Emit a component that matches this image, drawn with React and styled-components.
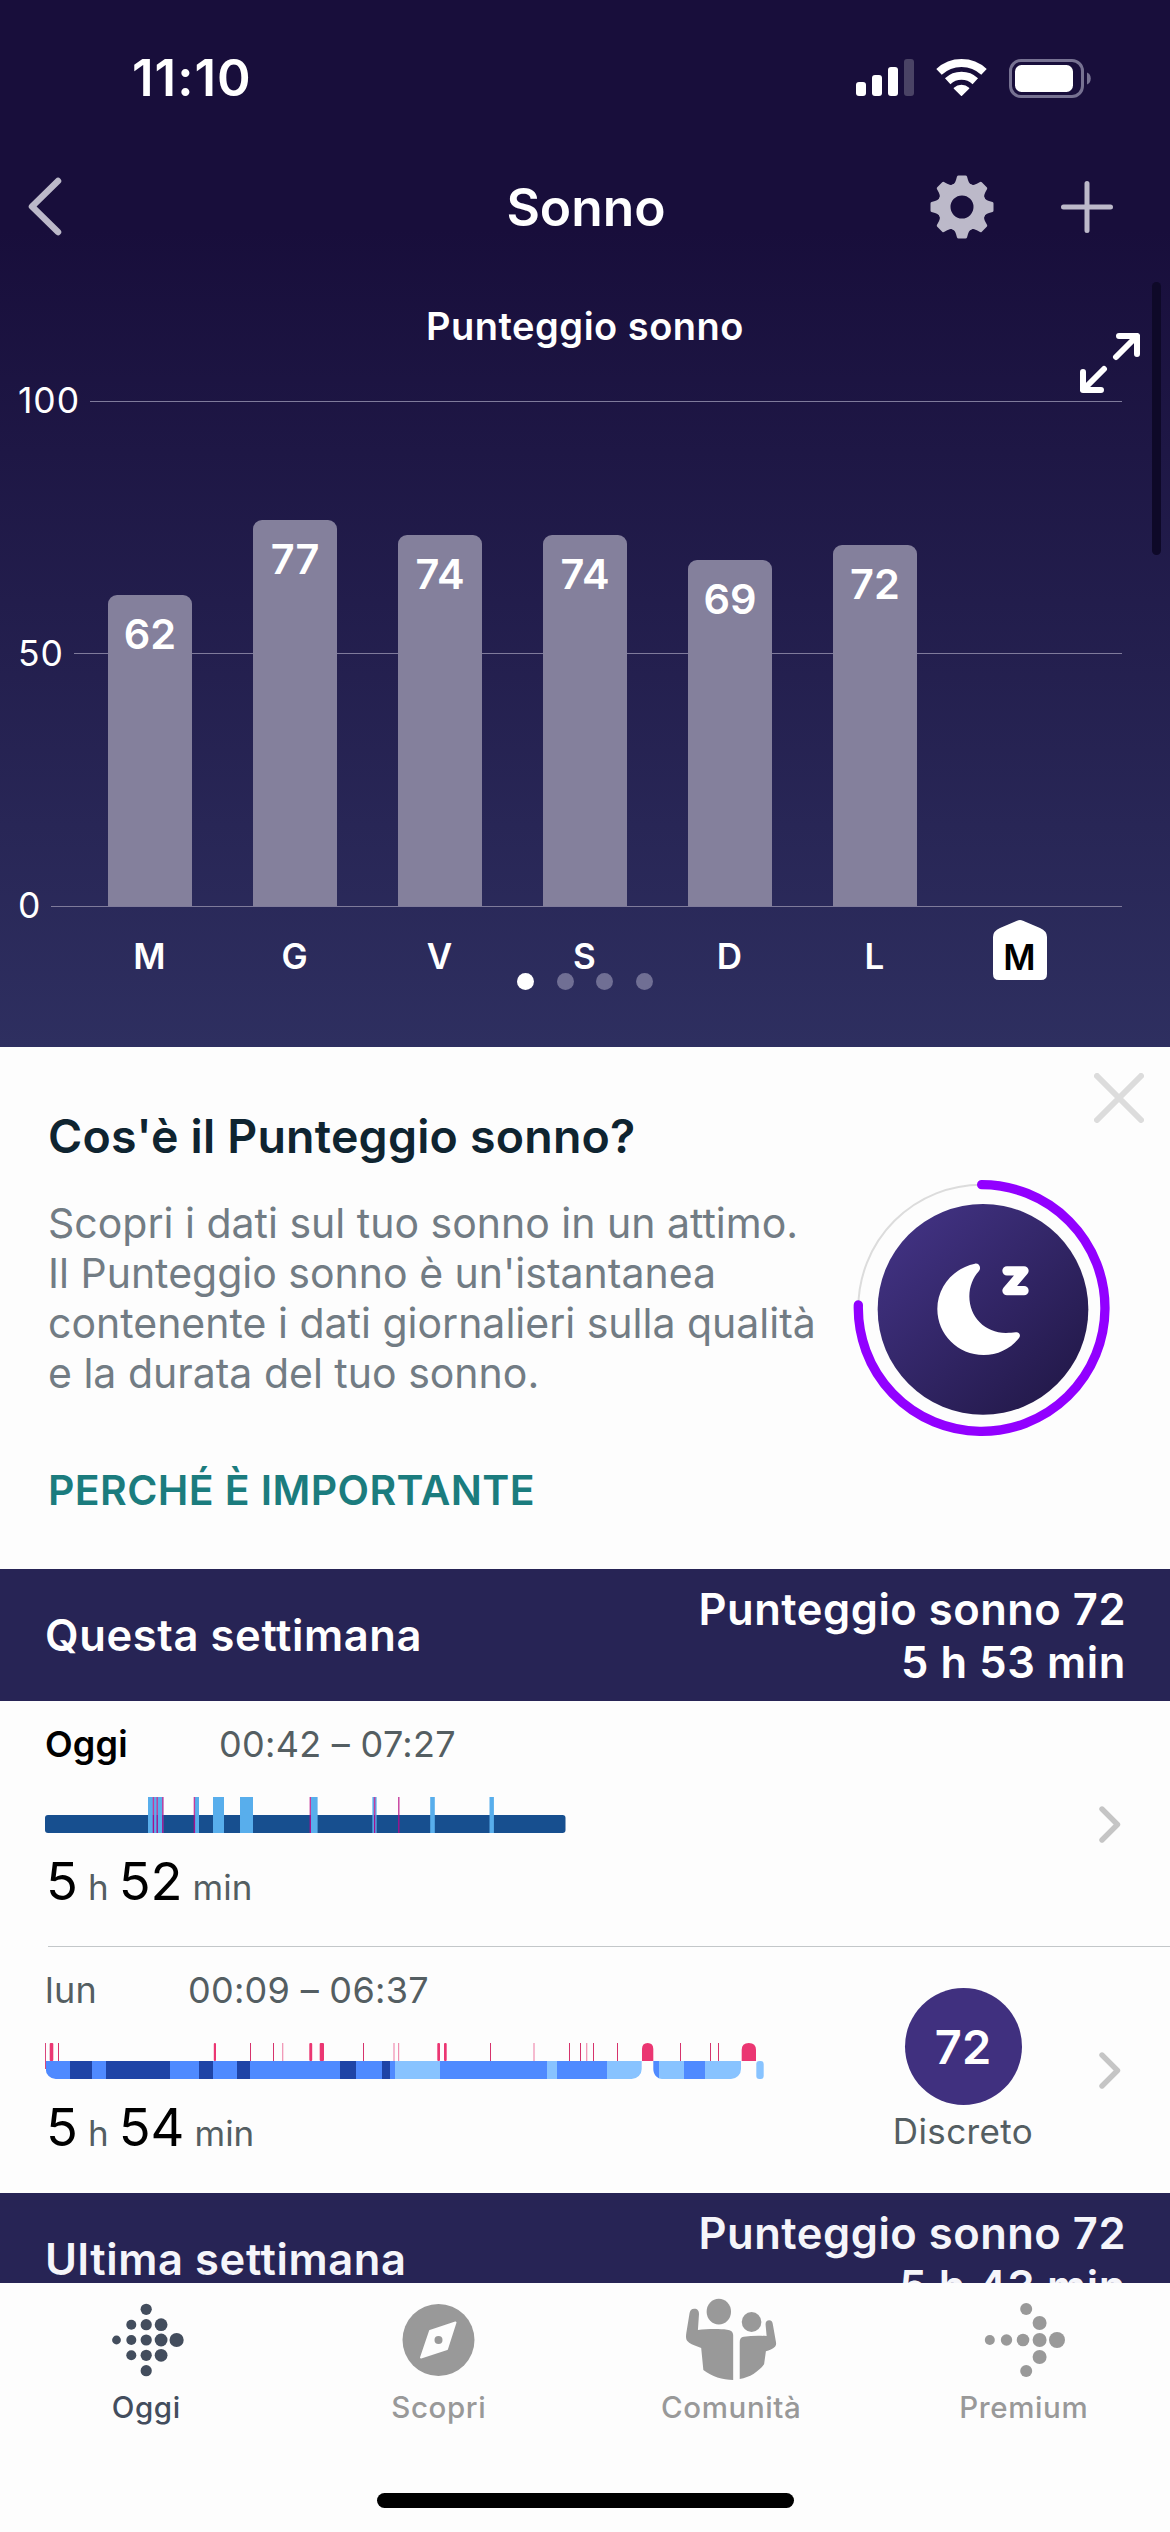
import React from "react";
import styled, { createGlobalStyle } from "styled-components";

const GlobalStyle = createGlobalStyle`
  * { box-sizing: border-box; }
  body {
    margin: 0;
    background: #fdfdfd;
    font-family: Inter, "Liberation Sans", sans-serif;
  }
`;

const Screen = styled.div`
  width: 1170px;
  height: 2532px;
  overflow: hidden;
  display: flex;
  flex-direction: column;
  background: #fdfdfd;
`;

const Text = styled.span`
  font-size: ${(p) => p.$size}px;
  font-weight: ${(p) => p.$weight || 400};
  letter-spacing: ${(p) => p.$track || 0}px;
  color: ${(p) => p.$color || "#fff"};
  line-height: ${(p) => p.$line || 44}px;
  white-space: nowrap;
`;

/* ---------- hero ---------- */

const Hero = styled.header`
  position: relative;
  flex: none;
  height: 1047px;
  background: linear-gradient(180deg, #180e3b 0, #180e3b 230px, #2e2f60 100%);
`;

const StatusBar = styled.div`
  height: 156px;
  padding: 0 79px 0 132px;
  display: flex;
  align-items: center;
  justify-content: space-between;
`;

const StatusIcons = styled.div`
  display: flex;
  align-items: center;
  gap: 22px;
`;

const NavBar = styled.nav`
  height: 101px;
  padding: 0 53px 0 26px;
  display: grid;
  grid-template-columns: 1fr auto 1fr;
  align-items: center;
`;

const NavActions = styled.div`
  display: flex;
  justify-content: flex-end;
  align-items: center;
  gap: 63px;
`;

const NavTitle = styled(Text)`
  padding-left: 29px;
`;

const ChartTitle = styled(Text)`
  display: block;
  margin: 46px 0 37px;
  text-align: center;
`;

const Plot = styled.div`
  display: grid;
  height: 533px;
`;

const AxisLayer = styled.div`
  grid-area: 1 / 1;
  padding: 0 48px 0 18px;
  display: flex;
  flex-direction: column;
  justify-content: space-between;
`;

const AxisRow = styled.div`
  height: 28px;
  display: flex;
  align-items: center;
  gap: 10px;
`;

const AxisLine = styled.i`
  flex: 1;
  height: 1px;
  background: #7f7b9b;
`;

const BarLayer = styled.div`
  grid-area: 1 / 1;
  padding: 0 0 14px 108px;
  display: flex;
  align-items: flex-end;
  gap: 61px;
`;

const Bar = styled.div`
  width: 84px;
  height: ${(p) => p.$score * 5.015}px;
  padding-top: 17px;
  border-radius: 9px 9px 0 0;
  background: #84809c;
  text-align: center;
`;

const Days = styled.div`
  height: 60px;
  margin-left: 77px;
  display: flex;
`;

const Day = styled.div`
  width: 145px;
  padding-top: 14px;
  display: flex;
  justify-content: center;
`;

const TodayTag = styled.div`
  position: relative;
  width: 54px;
  height: 60px;
  margin-top: -14px;
  padding-top: 15px;
  text-align: center;
  svg { position: absolute; inset: 0; }
  span { position: relative; }
`;

const Dots = styled.div`
  margin-top: -7px;
  display: flex;
  justify-content: center;
  gap: 22.6px;
`;

const Dot = styled.i`
  width: 17px;
  height: 17px;
  border-radius: 50%;
  background: ${(p) => (p.$active ? "#fff" : "#706f94")};
`;

const ExpandButton = styled.div`
  position: absolute;
  left: 1080px;
  top: 333px;
  line-height: 0;
`;

const ScrollThumb = styled.i`
  position: absolute;
  right: 9px;
  top: 282px;
  width: 9px;
  height: 273px;
  border-radius: 5px;
  background: #0e0928;
`;

/* ---------- info card ---------- */

const InfoCard = styled.section`
  position: relative;
  flex: none;
  height: 522px;
  padding: 59px 0 0 48px;
  display: flex;
`;

const InfoCopy = styled.div`
  width: 805px;
  display: flex;
  flex-direction: column;
`;

const InfoBody = styled(Text)`
  margin: 32px 0 67px;
`;

const Ring = styled.div`
  margin-top: 73px;
  line-height: 0;
`;

const CloseButton = styled.div`
  position: absolute;
  right: 26px;
  top: 26px;
  line-height: 0;
`;

/* ---------- list ---------- */

const List = styled.main`
  flex: none;
  height: 714px;
  overflow: hidden;
`;

const WeekHeader = styled.div`
  height: 132px;
  padding: 0 44px 0 45px;
  display: flex;
  align-items: center;
  justify-content: space-between;
  background: #272455;
`;

const WeekTotals = styled.div`
  padding-top: 2px;
  display: flex;
  flex-direction: column;
  align-items: flex-end;
`;

const NightRow = styled.article`
  height: 246px;
  padding: 0 50px 0 45px;
  display: grid;
  grid-template-columns: 1fr 150px 21px;
  column-gap: 61px;
  background: ${(p) =>
    p.$divided
      ? "linear-gradient(#c3c7c9, #c3c7c9) 48px 100% / 1122px 1px no-repeat"
      : "none"};
`;

const Night = styled.div`
  padding-top: 21px;
  svg { display: block; margin-top: 31px; }
`;

const NightHead = styled.div`
  display: flex;
  gap: 91px;
`;

const Duration = styled.div`
  margin: 18px 0 0 1px;
  display: flex;
  align-items: baseline;
  gap: 10px;
`;

const Score = styled.div`
  padding-top: 41px;
  display: flex;
  flex-direction: column;
  align-items: center;
  gap: 6px;
`;

const ScoreDisc = styled.div`
  width: 117px;
  height: 117px;
  border-radius: 50%;
  background: #40307f;
  display: flex;
  align-items: center;
  justify-content: center;
`;

const RowChevron = styled.div`
  align-self: center;
  line-height: 0;
`;

/* ---------- tab bar ---------- */

const TabBar = styled.footer`
  flex: 1;
  display: flex;
  flex-direction: column;
  align-items: center;
  background: #fdfdfd;
`;

const Tabs = styled.div`
  width: 100%;
  height: 210px;
  display: grid;
  grid-template-columns: repeat(4, 1fr);
`;

const Tab = styled.div`
  padding-top: 12px;
  display: flex;
  flex-direction: column;
  align-items: center;
  gap: 2px;
  color: ${(p) => (p.$active ? "#434d5d" : "#999")};
`;

const HomeIndicator = styled.i`
  width: 417px;
  height: 15px;
  border-radius: 8px;
  background: #000;
`;

/* ---------- drawings ---------- */

const Signal = () => (
  <svg width="58" height="38" viewBox="0 0 58 38">
    <g fill="#fff">
      <rect x="0" y="23" width="10" height="14" rx="3" />
      <rect x="16" y="16" width="10" height="21" rx="3" />
      <rect x="32" y="8" width="10" height="29" rx="3" />
      <rect x="48" y="0" width="10" height="37" rx="3" fill="#4a4365" />
    </g>
  </svg>
);

const Wifi = () => (
  <svg width="51" height="38" viewBox="0 0 51 38">
    <g fill="none" stroke="#fff" strokeWidth="8">
      <path d="M3 12.9A33 33 0 0 1 48 12.9" />
      <path d="M11.7 22.2A20.3 20.3 0 0 1 39.3 22.2" />
    </g>
    <path
      d="M25.5 36.2L18.4 29.2A10.5 10.5 0 0 1 32.6 29.2Z"
      fill="#fff"
      stroke="#fff"
      strokeWidth="1.5"
      strokeLinejoin="round"
    />
  </svg>
);

const Battery = () => (
  <svg width="82" height="39" viewBox="0 0 82 39">
    <rect x="1.5" y="1.5" width="72" height="36" rx="10.5" fill="none" stroke="#777292" strokeWidth="3" />
    <rect x="6" y="6" width="58" height="27" rx="6.5" fill="#fff" />
    <path d="M78 13.5C83 15 83 24 78 25.5Z" fill="#777292" />
  </svg>
);

const Back = () => (
  <svg width="37" height="63" viewBox="0 0 37 63">
    <path d="M32 6L6 31.500L32 57" fill="none" stroke="#bcb9c9" strokeWidth="6.500" strokeLinecap="round" strokeLinejoin="round" />
  </svg>
);

const Gear = () => (
  <svg width="64" height="64" viewBox="-32 -32 64 64">
    <circle r="18" fill="none" stroke="#bcb9c9" strokeWidth="13" />
    {[0, 45, 90, 135, 180, 225, 270, 315].map((a) => (
      <path
        key={a}
        transform={`rotate(${a})`}
        d="M-11 -20.500C-8 -23 -7 -24 -6 -27L-5 -30.500Q-4.600 -31.500 -3.500 -31.500H3.500Q4.600 -31.500 5 -30.500L6 -27C7 -24 8 -23 11 -20.500Z"
        fill="#bcb9c9"
      />
    ))}
  </svg>
);

const Plus = () => (
  <svg width="60" height="60" viewBox="0 0 60 60">
    <path d="M30 6.500V53.500M6.500 30H53.500" stroke="#bcb9c9" strokeWidth="5" strokeLinecap="round" />
  </svg>
);

const Expand = () => (
  <svg width="60" height="60" viewBox="0 0 60 60" fill="none" stroke="#fff" strokeWidth="6" strokeLinecap="round" strokeLinejoin="round">
    <path d="M39 3H57V21M57 3L36 24" />
    <path d="M3 39V57H21M3 57L24 36" />
  </svg>
);

const Close = () => (
  <svg width="50" height="50" viewBox="0 0 50 50">
    <path d="M3 3L47 47M47 3L3 47" stroke="#dcdcdc" strokeWidth="6" strokeLinecap="round" />
  </svg>
);

const SleepRing = () => (
  <svg width="258" height="258" viewBox="159 416 774 774">
    <defs>
      <linearGradient id="disc" x1="0.15" y1="0.12" x2="0.85" y2="0.88">
        <stop offset="0" stopColor="#403180" />
        <stop offset="1" stopColor="#241a4c" />
      </linearGradient>
    </defs>
    <circle cx="545" cy="803" r="370" fill="none" stroke="#dcdcdc" strokeWidth="6" />
    <path d="M545 433A370 370 0 1 1 175 794" fill="none" stroke="#9200ff" strokeWidth="28" strokeLinecap="round" />
    <circle cx="549" cy="807" r="316" fill="url(#disc)" />
    <path
      d="M525 670C460 683 412 740 412 806C412 883 474 944 551 944C594 944 632 925 657 893C664 884 657 874 647 876C638 877 630 878 618 878C555 878 508 830 508 768C508 738 519 712 537 692C545 682 537 668 525 670Z"
      fill="#fff"
    />
    <path d="M621 691.500H672L621 751H672" fill="none" stroke="#fff" strokeWidth="28" strokeLinecap="round" strokeLinejoin="round" />
  </svg>
);

const Chevron = () => (
  <svg width="22" height="37" viewBox="0 0 22 37">
    <path d="M3 3L18.500 18.500L3 34" fill="none" stroke="#c5c5c5" strokeWidth="5.400" strokeLinecap="round" strokeLinejoin="round" />
  </svg>
);

const TagShape = () => (
  <svg width="54" height="60" viewBox="0 0 54 60">
    <path d="M27 0Q28.500 0 30 0.800L47 8Q54 11 54 17V54Q54 60 48 60H6Q0 60 0 54V17Q0 11 7 8L24 0.800Q25.500 0 27 0Z" fill="#fff" />
  </svg>
);

const asleepStripes = [
  [148, 15.3], [194.5, 4.5], [213, 11], [240, 13], [311, 6.6], [372.4, 4.2], [430.2, 4.6], [489.5, 4.4],
];
const awakeStripes = [153.4, 157.2, 162.8, 194.4, 310.3, 374.6, 398.8];

const TodayGraph = () => (
  <svg width="521" height="36" viewBox="45 0 521 36">
    <rect x="45" y="18" width="520.500" height="18" rx="3" fill="#174f8f" />
    {asleepStripes.map(([x, w]) => (
      <rect key={x} x={x} y="0" width={w} height="36" fill="#58aeec" />
    ))}
    {awakeStripes.map((x) => (
      <g key={x}>
        <rect x={x - 0.7} y="0" width="1.400" height="18" fill="#c53a9c" />
        <rect x={x - 0.7} y="18" width="1.400" height="18" fill="#a3128c" />
      </g>
    ))}
  </svg>
);

const DEEP = "#1f44a6";
const CORE = "#4f8aff";
const LIGHT = "#88c3ff";
const PINK = "#eb3672";

const stages = [
  [45.7, 70, CORE], [70, 91.7, DEEP], [91.7, 106, CORE], [106, 170, DEEP], [170, 199, CORE],
  [199, 213.3, DEEP], [213.3, 237, CORE], [237, 249.7, DEEP], [249.7, 340, CORE], [340, 356, DEEP],
  [356, 382, CORE], [382, 389.7, DEEP], [389.7, 395, CORE], [395, 440, LIGHT], [440, 547, CORE],
  [547, 557, LIGHT], [557, 607, CORE], [607, 641.7, LIGHT], [653.3, 658.7, CORE], [658.7, 684, LIGHT],
  [684, 705, CORE], [705, 741, LIGHT], [756.3, 763.7, LIGHT],
];
const thinTicks = [
  58.5, 250.5, 273.5, 363.5, 490.5, 569.5, 580.5, 593.5, 617.5, 680.5, 710.5, 718.5,
];
const paleTicks = [282.7, 394, 398.6, 534, 586.7];
const wideTicks = [[49.7, 3.6], [213.8, 2.2], [309.3, 2.9], [319.7, 4.3], [437.3, 2.7], [444, 2.7]];

const StageGraph = () => (
  <svg width="720" height="36" viewBox="45 0 720 36">
    <defs>
      <clipPath id="runs">
        <path d="M45 0H641.700V26A10 10 0 0 1 631.700 36H55.700A10 10 0 0 1 45.700 26Z" />
        <path d="M653.300 18H741V26A10 10 0 0 1 731 36H662A8.700 10 0 0 1 653.300 26Z" />
        <rect x="756.300" y="18" width="7.400" height="18" rx="3" />
      </clipPath>
    </defs>
    <g clipPath="url(#runs)" shapeRendering="crispEdges">
      {stages.map(([a, b, c]) => (
        <rect key={a} x={a} y="18" width={b - a} height="18" fill={c} />
      ))}
    </g>
    <rect x="45" y="0" width="1" height="26" fill="#d9467c" />
    {thinTicks.map((x) => (
      <rect key={x} x={x - 0.5} y="0" width="1" height="18" fill="#d6336c" />
    ))}
    {paleTicks.map((x) => (
      <rect key={x} x={x - 0.6} y="0" width="1.200" height="18" fill="#f08fb1" />
    ))}
    {wideTicks.map(([x, w]) => (
      <rect key={x} x={x} y="0" width={w} height="18" rx="1" fill={PINK} />
    ))}
    <path d="M642 18V6Q642 0 647.700 0Q653.300 0 653.300 6V18Z" fill={PINK} />
    <path d="M741.700 18V7Q741.700 0 748.800 0Q756 0 756 7V18Z" fill={PINK} />
  </svg>
);

const todayDots = [
  [15.5, 45, 4.4], [30.3, 29.7, 5], [30.3, 45, 5], [30.3, 60.3, 5],
  [45.2, 14.3, 5.6], [45.2, 29.7, 5.6], [45.2, 45, 5.6], [45.2, 60.3, 5.6], [45.2, 75.7, 5.6],
  [60.1, 29.7, 6.4], [60.1, 45, 6.4], [60.1, 60.3, 6.4], [75.6, 45, 7.1],
];
const premiumDots = [
  [10.8, 45, 5], [27.5, 45, 5.7], [44, 45, 6.3], [60.6, 45, 7], [78, 45, 8],
  [60.6, 28, 7], [60.6, 62, 7], [47.2, 14, 6], [47.2, 76, 6],
];

const DotIcon = ({ dots }) => (
  <svg width="90" height="90" viewBox="0 0 90 90" fill="currentColor">
    {dots.map(([x, y, r]) => (
      <circle key={`${x}-${y}`} cx={x} cy={y} r={r} />
    ))}
  </svg>
);

const Compass = () => (
  <svg width="90" height="90" viewBox="0 0 90 90">
    <circle cx="44.500" cy="45" r="36" fill="currentColor" />
    <path d="M36 36L61.500 27.500L53 54L27 62.500Z" fill="#fdfdfd" stroke="#fdfdfd" strokeWidth="2" strokeLinejoin="round" />
    <circle cx="44.500" cy="45" r="4" fill="currentColor" />
  </svg>
);

const People = () => (
  <svg width="96" height="90" viewBox="231 345 264 270" preserveAspectRatio="none" fill="currentColor">
    <ellipse cx="329.500" cy="395" rx="33.500" ry="38.500" />
    <ellipse cx="419.500" cy="426" rx="27" ry="30" />
    <path d="M262 386C254 386 250 392 249 400L240 460C238 476 240 482 248 488C256 494 270 499 281 504L287 570C310 590 340 600 369 600V466C369 454 362 450 352 449C328 446 296 447 272 450L275 402C275 392 271 386 262 386Z" />
    <path d="M468 421C462 421 458 425 458 433L461 468C440 467 418 467 398 470C390 471 387 477 387 486V597C415 592 438 575 454 553L459 514C468 511 478 506 484 500C487 496 488 492 486 482L478 433C477 425 474 421 468 421Z" />
  </svg>
);

/* ---------- data ---------- */

const week = [
  { day: "M", score: 62 },
  { day: "G", score: 77 },
  { day: "V", score: 74 },
  { day: "S", score: 74 },
  { day: "D", score: 69 },
  { day: "L", score: 72 },
];

const tabs = [
  { label: "Oggi", icon: <DotIcon dots={todayDots} />, active: true },
  { label: "Scopri", icon: <Compass /> },
  { label: "Comunità", icon: <People /> },
  { label: "Premium", icon: <DotIcon dots={premiumDots} /> },
];

const Week = ({ name, score, time, color }) => (
  <WeekHeader>
    <Text $size={43.5} $weight={600} $track={0.6} $color={color}>{name}</Text>
    <WeekTotals>
      <Text $size={43.5} $weight={600} $track={0.5} $line={53} $color={color}>Punteggio sonno {score}</Text>
      <Text $size={43.5} $weight={600} $track={0.6} $line={53} $color={color}>{time}</Text>
    </WeekTotals>
  </WeekHeader>
);

const NightEntry = ({ name, today, range, hours, minutes, graph, score, verdict }) => (
  <NightRow $divided={today}>
    <Night>
      <NightHead>
        <Text $size={36} $weight={today ? 600 : 400} $track={0.2} $color={today ? "#000" : "#545e62"}>{name}</Text>
        <Text $size={36} $track={0.3} $color="#545e62">{range}</Text>
      </NightHead>
      {graph}
      <Duration>
        <Text $size={52.5} $line={60} $color="#000">{hours}</Text>
        <Text $size={35} $line={60} $color="#545e62">h</Text>
        <Text $size={52.5} $line={60} $color="#000">{minutes}</Text>
        <Text $size={35} $line={60} $color="#545e62">min</Text>
      </Duration>
    </Night>
    <Score>
      {score && (
        <>
          <ScoreDisc><Text $size={47} $weight={600}>{score}</Text></ScoreDisc>
          <Text $size={35} $track={0.4} $line={40} $color="#545e62">{verdict}</Text>
        </>
      )}
    </Score>
    <RowChevron><Chevron /></RowChevron>
  </NightRow>
);

export default function App() {
  return (
    <Screen>
      <GlobalStyle />
      <Hero>
        <StatusBar>
          <Text $size={51} $weight={600} $track={1}>11:10</Text>
          <StatusIcons><Signal /><Wifi /><Battery /></StatusIcons>
        </StatusBar>
        <NavBar>
          <Back />
          <NavTitle $size={51.5} $weight={600} $line={60}>Sonno</NavTitle>
          <NavActions><Gear /><Plus /></NavActions>
        </NavBar>
        <ChartTitle $size={38} $weight={600} $track={0.5} $line={47}>Punteggio sonno</ChartTitle>
        <Plot>
          <AxisLayer>
            {[100, 50, 0].map((v) => (
              <AxisRow key={v}>
                <Text $size={35.5} $track={0.9} $line={28}>{v}</Text>
                <AxisLine />
              </AxisRow>
            ))}
          </AxisLayer>
          <BarLayer>
            {week.map((d) => (
              <Bar key={d.day} $score={d.score}>
                <Text $size={41.5} $weight={600}>{d.score}</Text>
              </Bar>
            ))}
          </BarLayer>
        </Plot>
        <Days>
          {week.map((d) => (
            <Day key={d.day}><Text $size={35} $weight={600}>{d.day}</Text></Day>
          ))}
          <Day>
            <TodayTag>
              <TagShape />
              <Text $size={35} $weight={600} $color="#000">M</Text>
            </TodayTag>
          </Day>
        </Days>
        <Dots><Dot $active /><Dot /><Dot /><Dot /></Dots>
        <ExpandButton><Expand /></ExpandButton>
        <ScrollThumb />
      </Hero>

      <InfoCard>
        <InfoCopy>
          <Text $size={46.5} $weight={600} $track={0.2} $line={60} $color="#0f2430">Cos'è il Punteggio sonno?</Text>
          <InfoBody $size={41} $line={50} $color="#727c84">
            Scopri i dati sul tuo sonno in un attimo.<br />
            Il Punteggio sonno è un'istantanea<br />
            contenente i dati giornalieri sulla qualità<br />
            e la durata del tuo sonno.
          </InfoBody>
          <Text $size={41} $weight={600} $track={0.4} $line={50} $color="#1b7c7e">PERCHÉ È IMPORTANTE</Text>
        </InfoCopy>
        <Ring><SleepRing /></Ring>
        <CloseButton><Close /></CloseButton>
      </InfoCard>

      <List>
        <Week name="Questa settimana" score="72" time="5 h 53 min" color="#fff" />
        <NightEntry today name="Oggi" range="00:42 – 07:27" hours="5" minutes="52" graph={<TodayGraph />} />
        <NightEntry name="lun" range="00:09 – 06:37" hours="5" minutes="54" graph={<StageGraph />} score="72" verdict="Discreto" />
        <Week name="Ultima settimana" score="72" time="5 h 43 min" color="#f5f5fa" />
      </List>

      <TabBar>
        <Tabs>
          {tabs.map((t) => (
            <Tab key={t.label} $active={t.active}>
              {t.icon}
              <Text $size={29.5} $weight={500} $track={0.6} $line={40} $color="inherit">{t.label}</Text>
            </Tab>
          ))}
        </Tabs>
        <HomeIndicator />
      </TabBar>
    </Screen>
  );
}
